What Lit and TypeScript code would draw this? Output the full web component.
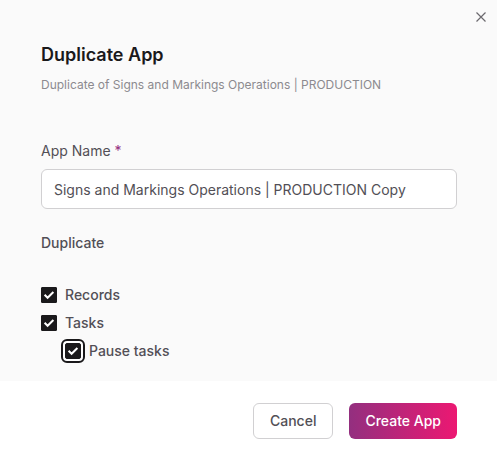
import { LitElement, html, css } from "lit";
import { customElement, property, state } from "lit/decorators.js";

@customElement("check-option")
class CheckOption extends LitElement {
  static styles = css`
    :host {
      display: block;
    }
    .option {
      display: flex;
      align-items: center;
      gap: 8px;
      font-size: 14px;
      font-weight: 500;
      line-height: 20px;
      color: #524f56;
      cursor: pointer;
    }
    .mark {
      display: grid;
      width: 16px;
      height: 16px;
    }
    .box,
    .tick {
      grid-area: 1 / 1;
      width: 16px;
      height: 16px;
      margin: 0;
    }
    .box {
      appearance: none;
      box-sizing: border-box;
      border: 1px solid #1a191b;
      border-radius: 1px;
      background: #fff;
      outline: none;
    }
    .box:checked {
      background: #1a191b;
    }
    .tick {
      fill: none;
      stroke: #fff;
      stroke-width: 2;
      pointer-events: none;
    }
    .ringed .box {
      border-radius: 2px;
      outline: 2px solid #1a191b;
      outline-offset: 2px;
      box-shadow: 0 0 0 2px #fff;
    }
  `;

  @property() label = "";
  @property({ type: Boolean }) checked = true;
  @property({ type: Boolean }) ringed = false;

  render() {
    return html`
      <label class="option ${this.ringed ? "ringed" : ""}">
        <span class="mark">
          <input
            class="box"
            type="checkbox"
            .checked=${this.checked}
            @change=${(e: Event) => (this.checked = (e.target as HTMLInputElement).checked)}
          />
          <svg class="tick" viewBox="0 0 16 16" aria-hidden="true">
            <path d="M3.6 7.8 6.6 10.8 12.4 5" />
          </svg>
        </span>
        ${this.label}
      </label>
    `;
  }
}

@customElement("app-root")
class AppRoot extends LitElement {
  static styles = css`
    :host {
      display: flex;
      flex-direction: column;
      min-height: 100vh;
      background: #fff;
      color: #524f56;
      font-family: Inter, sans-serif;
      font-size: 14px;
      line-height: 20px;
    }
    .body {
      position: relative;
      padding: 41px 40px 20px 41px;
      background: #fafafa;
    }
    .close {
      position: absolute;
      top: 9px;
      right: 8px;
      display: grid;
      place-items: center;
      width: 16px;
      height: 16px;
      padding: 0;
      border: 0;
      background: none;
      cursor: pointer;
    }
    .cross {
      width: 10px;
      height: 10px;
      stroke: #6b696e;
      stroke-width: 1.2;
    }
    .title {
      margin: 0;
      font-size: 18px;
      font-weight: 600;
      line-height: 28px;
      color: #1a191b;
    }
    .subtitle {
      margin: 8px 0 0;
      font-size: 12px;
      line-height: 16px;
      color: #8c8a8f;
    }
    .label {
      display: block;
      margin-top: 48px;
    }
    .required {
      color: #932f7f;
    }
    .field {
      box-sizing: border-box;
      display: block;
      width: 100%;
      height: 40px;
      margin-top: 8px;
      padding: 0 12px;
      border: 1px solid #d1d0d2;
      border-radius: 6px;
      background: #fff;
      color: inherit;
      font: inherit;
      outline: none;
    }
    .group {
      margin: 0;
      padding: 0;
      border: 0;
    }
    .legend {
      margin: 0;
      padding: 24px 0 32px;
      font-weight: 500;
    }
    .options {
      display: grid;
      gap: 8px;
    }
    .nested {
      padding-left: 24px;
    }
    .footer {
      display: flex;
      justify-content: flex-end;
      gap: 16px;
      padding: 22px 40px 16px;
    }
    .button {
      box-sizing: border-box;
      height: 36px;
      padding: 0 16px;
      border: 1px solid #d1d0d2;
      border-radius: 6px;
      background: #fff;
      color: #524f56;
      font: inherit;
      font-weight: 500;
      cursor: pointer;
    }
    .primary {
      border: 0;
      background: linear-gradient(90deg, #932f7f, #ec1872);
      color: #fff;
    }
  `;

  @state() private name = "Signs and Markings Operations | PRODUCTION Copy";

  render() {
    return html`
      <main class="body">
        <button class="close" type="button" aria-label="Close">
          <svg class="cross" viewBox="0 0 10 10" aria-hidden="true">
            <path d="M0.5 0.5 9.5 9.5M9.5 0.5 0.5 9.5" />
          </svg>
        </button>
        <h1 class="title">Duplicate App</h1>
        <p class="subtitle">Duplicate of Signs and Markings Operations | PRODUCTION</p>
        <label class="label" for="name">App Name <span class="required">*</span></label>
        <input
          id="name"
          class="field"
          type="text"
          required
          .value=${this.name}
          @input=${(e: Event) => (this.name = (e.target as HTMLInputElement).value)}
        />
        <fieldset class="group">
          <legend class="legend">Duplicate</legend>
          <div class="options">
            <check-option label="Records"></check-option>
            <check-option label="Tasks"></check-option>
            <check-option class="nested" label="Pause tasks" ringed></check-option>
          </div>
        </fieldset>
      </main>
      <footer class="footer">
        <button class="button" type="button">Cancel</button>
        <button class="button primary" type="button">Create App</button>
      </footer>
    `;
  }
}
